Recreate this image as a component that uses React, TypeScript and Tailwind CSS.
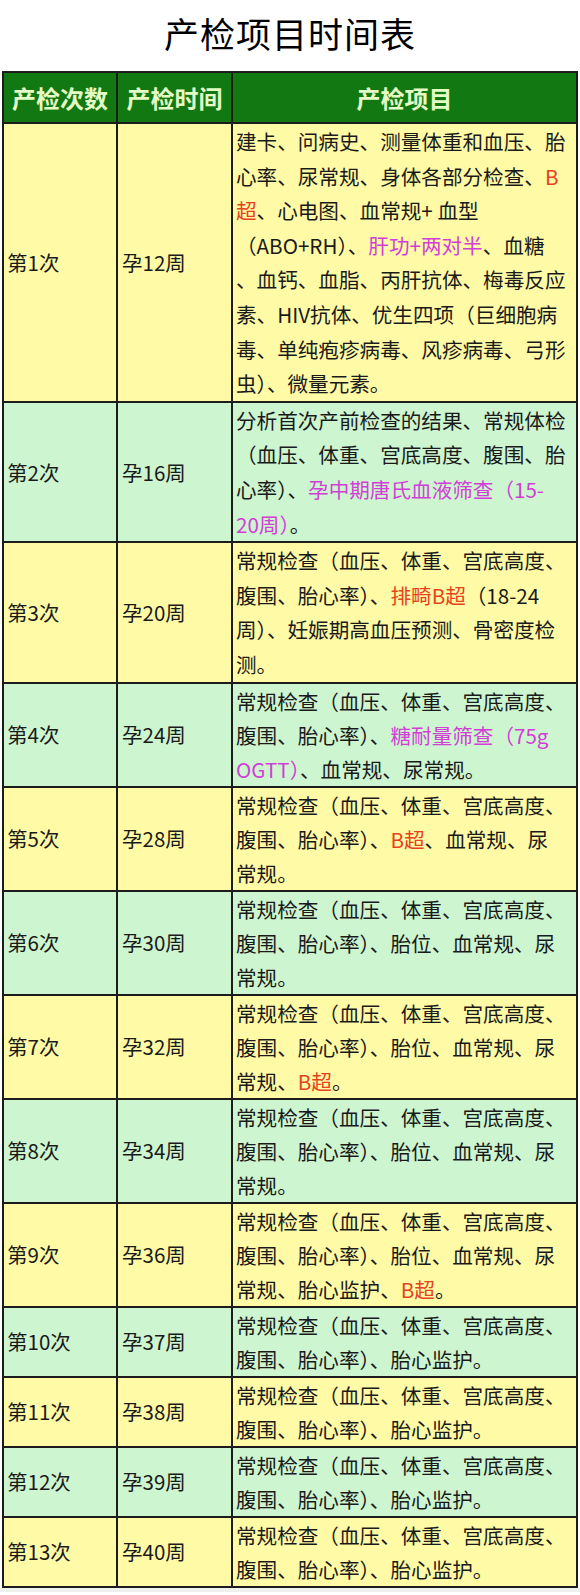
type Seg = { t: string; c?: "red" | "pink" }
type Line = Seg[]

const plain = (t: string): Line => [{ t }]

const checkLine1 = plain("常规检查（血压、体重、宫底高度、")

const visits: { no: string; week: string; lines: Line[] }[] = [
  {
    no: "第1次",
    week: "孕12周",
    lines: [
      plain("建卡、问病史、测量体重和血压、胎"),
      [{ t: "心率、尿常规、身体各部分检查、" }, { t: "B", c: "red" }],
      [{ t: "超", c: "red" }, { t: "、心电图、血常规+ 血型" }],
      [{ t: "（ABO+RH）、" }, { t: "肝功+两对半", c: "pink" }, { t: "、血糖" }],
      plain("、血钙、血脂、丙肝抗体、梅毒反应"),
      plain("素、HIV抗体、优生四项（巨细胞病"),
      plain("毒、单纯疱疹病毒、风疹病毒、弓形"),
      plain("虫）、微量元素。"),
    ],
  },
  {
    no: "第2次",
    week: "孕16周",
    lines: [
      plain("分析首次产前检查的结果、常规体检"),
      plain("（血压、体重、宫底高度、腹围、胎"),
      [{ t: "心率）、" }, { t: "孕中期唐氏血液筛查（15-", c: "pink" }],
      [{ t: "20周）", c: "pink" }, { t: "。" }],
    ],
  },
  {
    no: "第3次",
    week: "孕20周",
    lines: [
      checkLine1,
      [{ t: "腹围、胎心率）、" }, { t: "排畸B超", c: "red" }, { t: "（18-24" }],
      plain("周）、妊娠期高血压预测、骨密度检"),
      plain("测。"),
    ],
  },
  {
    no: "第4次",
    week: "孕24周",
    lines: [
      checkLine1,
      [{ t: "腹围、胎心率）、" }, { t: "糖耐量筛查（75g", c: "pink" }],
      [{ t: "OGTT）", c: "pink" }, { t: "、血常规、尿常规。" }],
    ],
  },
  {
    no: "第5次",
    week: "孕28周",
    lines: [
      checkLine1,
      [{ t: "腹围、胎心率）、" }, { t: "B超", c: "red" }, { t: "、血常规、尿" }],
      plain("常规。"),
    ],
  },
  {
    no: "第6次",
    week: "孕30周",
    lines: [checkLine1, plain("腹围、胎心率）、胎位、血常规、尿"), plain("常规。")],
  },
  {
    no: "第7次",
    week: "孕32周",
    lines: [
      checkLine1,
      plain("腹围、胎心率）、胎位、血常规、尿"),
      [{ t: "常规、" }, { t: "B超", c: "red" }, { t: "。" }],
    ],
  },
  {
    no: "第8次",
    week: "孕34周",
    lines: [checkLine1, plain("腹围、胎心率）、胎位、血常规、尿"), plain("常规。")],
  },
  {
    no: "第9次",
    week: "孕36周",
    lines: [
      checkLine1,
      plain("腹围、胎心率）、胎位、血常规、尿"),
      [{ t: "常规、胎心监护、" }, { t: "B超", c: "red" }, { t: "。" }],
    ],
  },
  { no: "第10次", week: "孕37周", lines: [checkLine1, plain("腹围、胎心率）、胎心监护。")] },
  { no: "第11次", week: "孕38周", lines: [checkLine1, plain("腹围、胎心率）、胎心监护。")] },
  { no: "第12次", week: "孕39周", lines: [checkLine1, plain("腹围、胎心率）、胎心监护。")] },
  { no: "第13次", week: "孕40周", lines: [checkLine1, plain("腹围、胎心率）、胎心监护。")] },
]

function segClass(c?: "red" | "pink") {
  if (c === "red") return "text-[#e6421e]"
  if (c === "pink") return "text-[#d23fd6]"
  return ""
}

export default function App() {
  return (
    <div
      className="w-[580px] min-h-[1595px] bg-white text-[#1a1a1a]"
      style={{ fontFamily: '"Noto Sans CJK SC", "Noto Sans", sans-serif' }}
    >
      {/* Title */}
      <div className="h-[71px] flex items-center justify-center pb-1">
        <h1 className="text-[35px] font-normal text-black tracking-[1px]">产检项目时间表</h1>
      </div>

      {/* Table */}
      <div className="ml-[2px] w-[576px] grid grid-cols-[114px_115px_1fr] border-t-2 border-l-2 border-[#1c1c1c]">
        {["产检次数", "产检时间", "产检项目"].map((h) => (
          <div
            key={h}
            className="h-[51px] flex items-center justify-center bg-[#127812] text-[#e4fbc6] text-[24px] font-bold border-r-2 border-b-2 border-[#1c1c1c]"
          >
            {h}
          </div>
        ))}

        {visits.map((v, i) => {
          const bg = i % 2 === 0 ? "bg-[#fffaa6]" : "bg-[#cdf5d0]"
          const leading = v.lines.length >= 4 ? "leading-[34.6px]" : "leading-[34px]"
          return (
            <div key={v.no} className="contents">
              <div className={`${bg} flex items-center pl-[3px] text-[20.5px] border-r-2 border-b-2 border-[#1c1c1c]`}>
                {v.no}
              </div>
              <div className={`${bg} flex items-center pl-[4px] text-[20.5px] border-r-2 border-b-2 border-[#1c1c1c]`}>
                {v.week}
              </div>
              <div className={`${bg} ${leading} pl-[3px] text-[20.6px] border-r-2 border-b-2 border-[#1c1c1c]`}>
                {v.lines.map((line, li) => (
                  <div key={li} className="whitespace-nowrap">
                    {line.map((s, si) => (
                      <span key={si} className={segClass(s.c)}>
                        {s.t}
                      </span>
                    ))}
                  </div>
                ))}
              </div>
            </div>
          )
        })}
      </div>
      <div className="h-[4px] bg-[#eef0ee]" />
    </div>
  )
}
